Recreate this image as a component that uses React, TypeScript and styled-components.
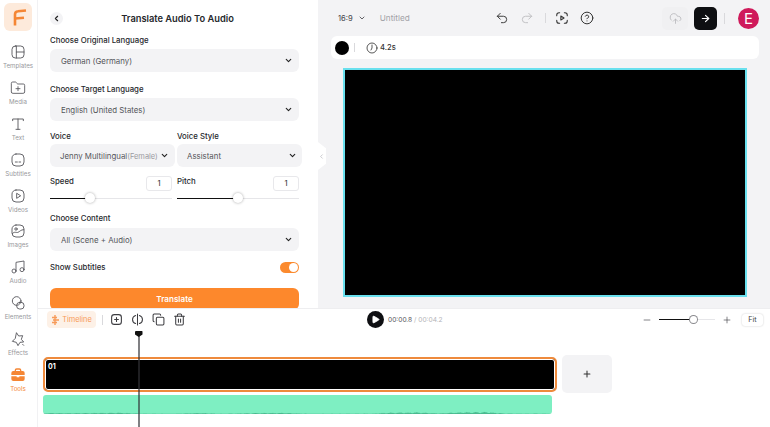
import React from 'react';
import styled, { createGlobalStyle } from 'styled-components';
import {
	ArrowRight, ChevronDown, ChevronLeft, CircleHelp, Clock7, CloudUpload, Copy,
	FolderPlus, Minus, Music, Play, Plus, Redo2, Trash2, Undo2
} from 'lucide-react';

const GlobalStyle = createGlobalStyle`
	html, body {
		margin: 0;
		padding: 0;
		background: #fff;
		font-family: Inter, "Liberation Sans", sans-serif;
	}
	* {
		box-sizing: border-box;
	}
`;

const Shell = styled.div`
	display: flex;
	width: 770px;
	height: 427px;
	overflow: hidden;
`;

/* left rail */
const Sidebar = styled.nav`
	flex: 0 0 38px;
	display: flex;
	flex-direction: column;
	align-items: center;
	padding: 3px 1px 0 0;
	border-right: 1px solid #f1f1f3;
`;

const Logo = styled.div`
	width: 28px;
	height: 28px;
	margin-bottom: 13px;
	border-radius: 6px;
	background: #fdeadb;
	display: flex;
	align-items: center;
	justify-content: center;
`;

const NavItem = styled.div<{ $active?: boolean }>`
	height: 35.9px;
	display: flex;
	flex-direction: column;
	align-items: center;
	gap: 1px;
	font-size: 6.2px;
	line-height: 9px;
	color: ${p => (p.$active ? '#f58634' : '#98989c')};
	svg {
		color: ${p => (p.$active ? '#f58634' : '#55555a')};
	}
`;

const NavIcon = styled.svg.attrs({
	viewBox: '0 0 24 24',
	fill: 'none',
	stroke: 'currentColor',
	strokeWidth: 1.35,
	strokeLinecap: 'round',
	strokeLinejoin: 'round'
})`
	width: 16px;
	height: 16px;
	flex: none;
`;

/* column with panel + stage above the timeline */
const Main = styled.div`
	flex: 1;
	min-width: 0;
	display: flex;
	flex-direction: column;
`;

const Upper = styled.div`
	flex: 0 0 308px;
	display: flex;
`;

const Panel = styled.section`
	flex: 0 0 280px;
	height: 308px;
	overflow: hidden;
	padding: 1px 19px 0 12px;
`;

const PanelHeader = styled.header`
	display: flex;
	align-items: center;
	height: 34px;
	padding-right: 7px;
`;

const BackButton = styled.div`
	flex: none;
	width: 13px;
	height: 13px;
	border-radius: 50%;
	background: #f3f3f5;
	display: flex;
	align-items: center;
	justify-content: center;
	color: #222;
`;

const Title = styled.h1`
	flex: 1;
	margin: 0;
	text-align: center;
	font-size: 9.3px;
	font-weight: 600;
	color: #26282c;
`;

const FieldLabel = styled.div<{ $gap?: number; $top?: number }>`
	margin-top: ${p => p.$top ?? 0}px;
	margin-bottom: ${p => p.$gap ?? 4}px;
	font-size: 7.8px;
	line-height: 10px;
	font-weight: 500;
	color: #26282c;
	white-space: nowrap;
`;

const Select = styled.div<{ $pad?: number; $right?: number }>`
	height: 23px;
	display: flex;
	align-items: center;
	justify-content: space-between;
	padding: 0 ${p => p.$right ?? 6}px 0 ${p => p.$pad ?? 11}px;
	border-radius: 6px;
	background: #f3f3f5;
	font-size: 7.85px;
	color: #55565b;
	white-space: nowrap;
	svg {
		color: #222;
		flex: none;
	}
`;

const Muted = styled.span`
	font-size: 7.45px;
	color: #9a9a9f;
`;

const VoiceRow = styled.div`
	display: grid;
	grid-template-columns: 125px 125px;
	column-gap: 2px;
	margin-top: 10px;
	width: 252px;
`;

const SliderRow = styled.div`
	display: grid;
	grid-template-columns: 122px 122px;
	column-gap: 5px;
	margin-top: 9px;
`;

const SliderHead = styled.div`
	display: flex;
	justify-content: space-between;
	align-items: flex-start;
	height: 15px;
	font-size: 7.8px;
	line-height: 10px;
	font-weight: 500;
	color: #26282c;
`;

const NumberBox = styled.div`
	width: 26px;
	height: 15px;
	display: flex;
	align-items: center;
	justify-content: center;
	border: 1px solid #e8e8eb;
	border-radius: 3px;
	font-size: 7.4px;
	color: #444;
`;

const SliderTrack = styled.div<{ $value: number }>`
	position: relative;
	height: 1px;
	margin-top: 6.5px;
	background: linear-gradient(
		90deg,
		#111 ${p => p.$value}%,
		#e6e6e9 ${p => p.$value}%
	);
	&::after {
		content: '';
		position: absolute;
		left: ${p => p.$value}%;
		top: -4.5px;
		width: 10px;
		height: 10px;
		margin-left: -5px;
		border-radius: 50%;
		background: #fff;
		box-shadow: 0 0 3px rgba(0, 0, 0, 0.35);
	}
`;

const SwitchRow = styled.div`
	display: flex;
	align-items: center;
	justify-content: space-between;
	height: 12px;
	margin-top: 10px;
	font-size: 7.8px;
	font-weight: 500;
	color: #26282c;
`;

const Toggle = styled.div`
	width: 19px;
	height: 11px;
	border-radius: 6px;
	background: #fb8a2e;
	display: flex;
	justify-content: flex-end;
	align-items: center;
	padding-right: 1px;
	&::after {
		content: '';
		width: 9px;
		height: 9px;
		border-radius: 50%;
		background: #fff;
	}
`;

const TranslateButton = styled.div`
	height: 22px;
	margin-top: 15px;
	border-radius: 6px;
	background: #fd882c;
	color: #fff;
	font-size: 8.1px;
	font-weight: 600;
	display: flex;
	align-items: center;
	justify-content: center;
`;

/* preview side */
const Stage = styled.section`
	flex: 1;
	position: relative;
	background: #f3f3f5;
`;

const CollapseTab = styled.div`
	position: absolute;
	left: 0;
	top: 142px;
	width: 8px;
	height: 28px;
	background: #fff;
	clip-path: polygon(0 0, 100% 22%, 100% 78%, 0 100%);
	display: flex;
	align-items: center;
	color: #a9a9ae;
`;

const TopBar = styled.div`
	display: flex;
	align-items: center;
	height: 36px;
	padding: 0 11px 0 20px;
	color: #333;
`;

const RatioGroup = styled.div`
	flex: 0 0 157px;
	display: flex;
	align-items: center;
	font-size: 7.6px;
	color: #44454a;
	svg {
		margin-left: 5px;
	}
`;

const DocName = styled.span`
	margin-left: 14px;
	font-size: 8.2px;
	color: #a2a2a7;
`;

const HistoryGroup = styled.div`
	display: flex;
	align-items: center;
	gap: 11px;
`;

const Rule = styled.span<{ $height?: number; $left?: number; $right?: number }>`
	display: inline-block;
	flex: none;
	width: 1px;
	height: ${p => p.$height ?? 10}px;
	margin: 0 ${p => p.$right ?? 0}px 0 ${p => p.$left ?? 0}px;
	background: #d9d9dc;
`;

const RightGroup = styled.div`
	margin-left: auto;
	display: flex;
	align-items: center;
`;

const CloudButton = styled.div`
	width: 26px;
	height: 23px;
	border-radius: 5px;
	background: #f0f0f2;
	display: flex;
	align-items: center;
	justify-content: center;
	color: #b6b6ba;
`;

const NextButton = styled.div`
	width: 23px;
	height: 23px;
	margin-left: 6px;
	border-radius: 5px;
	background: #0e0f12;
	color: #fff;
	display: flex;
	align-items: center;
	justify-content: center;
`;

const Avatar = styled.div`
	width: 21px;
	height: 21px;
	border-radius: 50%;
	background: #cf1a5b;
	color: #fff;
	font-size: 15px;
	display: flex;
	align-items: center;
	justify-content: center;
`;

const InfoStrip = styled.div`
	display: flex;
	align-items: center;
	height: 23px;
	margin: 0 11px 0 13px;
	padding-left: 4px;
	border-radius: 6px;
	background: #fff;
	color: #222;
`;

const ColorDot = styled.span`
	width: 14px;
	height: 14px;
	border-radius: 50%;
	background: #000;
	margin-right: 5px;
`;

const ClockIcon = styled(Clock7)`
	margin-left: 11px;
`;

const Duration = styled.span`
	margin-left: 2px;
	font-size: 7.6px;
	font-weight: 500;
	color: #333;
`;

const Canvas = styled.div`
	width: 404px;
	height: 229px;
	margin: 9px 0 0 25px;
	border: 2px solid #69e0ee;
	background: #000;
`;

/* timeline */
const Timeline = styled.section`
	position: relative;
	flex: 1;
	border-top: 1px solid #eeeef0;
`;

const TimelineBar = styled.div`
	display: flex;
	align-items: center;
	height: 21px;
	padding-right: 7px;
	color: #3c3c40;
`;

const ToolGroup = styled.div`
	flex: 0 0 329px;
	display: flex;
	align-items: center;
	padding-left: 9px;
`;

const TimelineTab = styled.div`
	width: 49px;
	height: 17px;
	display: flex;
	align-items: center;
	justify-content: center;
	gap: 3px;
	border-radius: 4px;
	background: #fdf1e7;
	color: #f79a58;
	font-size: 7.4px;
`;

const ToolIcons = styled.div`
	display: flex;
	align-items: center;
	gap: 8px;
	margin-left: 7px;
`;

const PlayButton = styled.div`
	width: 17px;
	height: 17px;
	border-radius: 50%;
	background: #0e0f12;
	color: #fff;
	display: flex;
	align-items: center;
	justify-content: center;
`;

const TimeText = styled.span`
	margin-left: 4px;
	font-size: 6.6px;
	color: #55565b;
`;

const TimeTotal = styled.span`
	color: #b4b4b8;
`;

const ZoomGroup = styled.div`
	margin-left: auto;
	display: flex;
	align-items: center;
`;

const ZoomTrack = styled(SliderTrack)`
	width: 56px;
	margin: 0 7px;
	&::after {
		width: 7px;
		height: 7px;
		top: -3px;
		margin-left: -3.5px;
		box-shadow: 0 0 0 1px #8a8a8e;
	}
`;

const FitButton = styled.div`
	width: 21px;
	height: 12px;
	margin-left: 10px;
	border-radius: 3px;
	box-shadow: 0 0 2px rgba(0, 0, 0, 0.22);
	font-size: 7.2px;
	color: #444;
	display: flex;
	align-items: center;
	justify-content: center;
`;

const Tracks = styled.div`
	margin-top: 25px;
	padding-left: 5px;
`;

const ClipRow = styled.div`
	display: flex;
	align-items: center;
	height: 38px;
`;

const Clip = styled.div`
	width: 514px;
	height: 35px;
	padding: 3px;
	border: 2px solid #ee8a3c;
	border-radius: 5px;
	box-shadow: inset 0 0 0 1px #fff;
	background: #000;
	color: #fff;
	font-size: 7px;
	font-weight: 700;
	line-height: 9px;
`;

const AddClip = styled.div`
	width: 50px;
	height: 38px;
	margin-left: 5px;
	border-radius: 5px;
	background: #f3f3f5;
	color: #333;
	display: flex;
	align-items: center;
	justify-content: center;
`;

const AudioTrack = styled.div`
	width: 509px;
	height: 19px;
	margin-top: 2px;
	border-radius: 3px;
	overflow: hidden;
	background: #7eefc2;
	display: flex;
	align-items: flex-end;
`;

const Wave = styled.svg`
	width: 100%;
	height: 4px;
	display: block;
`;

const Playhead = styled.div`
	position: absolute;
	left: 100px;
	top: 22px;
	bottom: 0;
	width: 1.5px;
	background: rgba(50, 50, 55, 0.62);
	&::before {
		content: '';
		position: absolute;
		left: -3px;
		top: 0;
		width: 7.5px;
		height: 6px;
		background: #111;
		border-radius: 1px;
		clip-path: polygon(0 0, 100% 0, 100% 60%, 50% 100%, 0 60%);
	}
`;

// rough envelope of the quiet clip, [x, height]
const envelope = [
	[0, 1], [50, 1.2], [75, 1.6], [100, 0.5], [130, 0.4], [155, 1.2], [180, 0.4], [205, 1],
	[240, 1.4], [265, 0.4], [330, 0.5], [345, 1.6], [375, 2], [395, 0.8], [420, 2.2], [445, 2.4],
	[462, 0.6], [509, 0.5]
];

const waveHeight = (x: number) => {
	const i = envelope.findIndex(e => e[0] >= x);
	if (i <= 0) return envelope[0][1];
	const [x0, h0] = envelope[i - 1];
	const [x1, h1] = envelope[i];
	const h = h0 + ((h1 - h0) * (x - x0)) / (x1 - x0);
	return h * (0.35 + 0.65 * Math.abs(Math.sin(x * 1.7) * Math.cos(x * 0.37)));
};

const wavePath = () => {
	let d = 'M0 4';
	for (let x = 0; x <= 509; x += 1) d += ` L${x} ${(4 - waveHeight(x)).toFixed(2)}`;
	return d + ' L509 4 Z';
};

const navItems: { label: string; icon: React.ReactNode; active?: boolean }[] = [
	{
		label: 'Templates',
		icon: <NavIcon><rect x="3" y="3" width="18" height="18" rx="5" /><path d="M9.5 3v18M9.5 12H21" /></NavIcon>
	},
	{ label: 'Media', icon: <FolderPlus size={16} strokeWidth={1.3} /> },
	{
		label: 'Text',
		icon: <NavIcon><path d="M4 7V4.5h16V7M12 4.5V20M9 20h6" /></NavIcon>
	},
	{
		label: 'Subtitles',
		icon: <NavIcon><rect x="3" y="3" width="18" height="18" rx="6" /><path d="M8 15h3M13.5 15H16" /></NavIcon>
	},
	{
		label: 'Videos',
		icon: <NavIcon><rect x="3" y="3" width="18" height="18" rx="6" /><path d="M10 8.500v7l5.500-3.500z" /></NavIcon>
	},
	{
		label: 'Images',
		icon: <NavIcon><rect x="3" y="3" width="18" height="18" rx="6" /><circle cx="9" cy="9" r="1.8" /><path d="M3.500 16c3-4 6-1 8.500-2s4-4 8.500-4" /></NavIcon>
	},
	{ label: 'Audio', icon: <Music size={16} strokeWidth={1.3} /> },
	{
		label: 'Elements',
		icon: <NavIcon><circle cx="10" cy="9" r="6.500" /><rect x="10" y="11" width="11" height="10" rx="4.500" /></NavIcon>
	},
	{
		label: 'Effects',
		icon: <NavIcon><path d="M10 3l3 4.500 6-.5-2 5.500 3.500 4-5.500.5-3 5-2.500-5-6-1.500 4-4z" /><path d="M19 20l1.500 1.500" /></NavIcon>
	},
	{
		label: 'Tools',
		active: true,
		icon: (
			<svg width="16" height="16" viewBox="0 0 24 24">
				<path d="M8 7V5a2 2 0 0 1 2-2h4a2 2 0 0 1 2 2v2" fill="none" stroke="#f58634" strokeWidth="2" />
				<path d="M2 9a3 3 0 0 1 3-3h14a3 3 0 0 1 3 3v3H2z" fill="#f58634" />
				<path d="M2 14h8v1.500h4V14h8v4a3 3 0 0 1-3 3H5a3 3 0 0 1-3-3z" fill="#f58634" />
			</svg>
		)
	}
];

const LanguageSelect: React.FC<{ text: string }> = ({ text }) => (
	<Select>
		<span>{text}</span>
		<ChevronDown size={9} strokeWidth={3} />
	</Select>
);

const App: React.FC = () => {
	return <Shell>
		<GlobalStyle />
		<Sidebar>
			<Logo>
				<svg width="28" height="28" viewBox="0 0 28 28" fill="none" stroke="#f58634" strokeWidth="2.6">
					<path d="M11 22.500V11.500Q11 8.500 14 8.300L22 7.500" />
					<path d="M11 15.500L20 14.800" />
				</svg>
			</Logo>
			{navItems.map(item => (
				<NavItem key={item.label} $active={item.active}>
					{item.icon}
					<span>{item.label}</span>
				</NavItem>
			))}
		</Sidebar>
		<Main>
			<Upper>
				<Panel>
					<PanelHeader>
						<BackButton><ChevronLeft size={9} strokeWidth={3} /></BackButton>
						<Title>Translate Audio To Audio</Title>
					</PanelHeader>
					<FieldLabel>Choose Original Language</FieldLabel>
					<LanguageSelect text="German (Germany)" />
					<FieldLabel $top={12}>Choose Target Language</FieldLabel>
					<LanguageSelect text="English (United States)" />
					<VoiceRow>
						<div>
							<FieldLabel $gap={3}>Voice</FieldLabel>
							<Select $pad={10} $right={6}>
								<span>Jenny Multilingual<Muted>(Female)</Muted></span>
								<ChevronDown size={9} strokeWidth={3} />
							</Select>
						</div>
						<div>
							<FieldLabel $gap={3}>Voice Style</FieldLabel>
							<Select $pad={10} $right={5}>
								<span>Assistant</span>
								<ChevronDown size={9} strokeWidth={3} />
							</Select>
						</div>
					</VoiceRow>
					<SliderRow>
						<div>
							<SliderHead>Speed<NumberBox>1</NumberBox></SliderHead>
							<SliderTrack $value={33} />
						</div>
						<div>
							<SliderHead>Pitch<NumberBox>1</NumberBox></SliderHead>
							<SliderTrack $value={50} />
						</div>
					</SliderRow>
					<FieldLabel $top={14.5} $gap={5}>Choose Content</FieldLabel>
					<LanguageSelect text="All (Scene + Audio)" />
					<SwitchRow>Show Subtitles<Toggle /></SwitchRow>
					<TranslateButton>Translate</TranslateButton>
				</Panel>
				<Stage>
					<CollapseTab><ChevronLeft size={7} strokeWidth={2} /></CollapseTab>
					<TopBar>
						<RatioGroup>
							16:9
							<ChevronDown size={8} strokeWidth={2.5} />
							<DocName>Untitled</DocName>
						</RatioGroup>
						<HistoryGroup>
							<Undo2 size={14} strokeWidth={1.6} />
							<Redo2 size={14} strokeWidth={1.6} color="#bdbdc1" />
							<Rule $right={-2} />
							<svg width="14" height="14" viewBox="0 0 24 24" fill="none" stroke="currentColor" strokeWidth="1.8" strokeLinecap="round" strokeLinejoin="round">
								<path d="M3 8V7a4 4 0 0 1 4-4h1M16 3h1a4 4 0 0 1 4 4v1M21 16v1a4 4 0 0 1-4 4h-1M8 21H7a4 4 0 0 1-4-4v-1" />
								<path d="M10 8.500v7l5.500-3.500z" />
							</svg>
							<CircleHelp size={14} strokeWidth={1.7} />
						</HistoryGroup>
						<RightGroup>
							<CloudButton><CloudUpload size={13} strokeWidth={1.5} /></CloudButton>
							<NextButton><ArrowRight size={11} strokeWidth={2.5} /></NextButton>
							<Rule $height={11} $left={7} $right={13} />
							<Avatar>E</Avatar>
						</RightGroup>
					</TopBar>
					<InfoStrip>
						<ColorDot />
						<Rule $height={9} />
						<ClockIcon size={12} strokeWidth={1.5} />
						<Duration>4.2s</Duration>
					</InfoStrip>
					<Canvas />
				</Stage>
			</Upper>
			<Timeline>
				<TimelineBar>
					<ToolGroup>
						<TimelineTab>
							<svg width="8" height="10" viewBox="0 0 8 10" fill="none" stroke="#f79a58" strokeWidth="1.4">
								<path d="M4 0v10M1 2.500h5M2 5h6M1 7.500h5" />
							</svg>
							Timeline
						</TimelineTab>
						<Rule $height={10} $left={6} />
						<ToolIcons>
							<svg width="13" height="13" viewBox="0 0 24 24" fill="none" stroke="currentColor" strokeWidth="2" strokeLinecap="round">
								<rect x="3" y="3" width="18" height="18" rx="5" />
								<path d="M12 8.500v7M8.500 12h7" />
							</svg>
							<svg width="13" height="13" viewBox="0 0 24 24" fill="none" stroke="currentColor" strokeWidth="1.9" strokeLinecap="round">
								<path d="M12 2v20M8.500 4.500a7.800 7.800 0 0 0 0 15M15.500 4.500a7.800 7.800 0 0 1 0 15" />
							</svg>
							<Copy size={13} strokeWidth={1.9} />
							<Trash2 size={13} strokeWidth={1.9} />
						</ToolIcons>
					</ToolGroup>
					<PlayButton><Play size={9} fill="#fff" strokeWidth={2} /></PlayButton>
					<TimeText>00:00.8 <TimeTotal>/ 00:04.2</TimeTotal></TimeText>
					<ZoomGroup>
						<Minus size={10} strokeWidth={1.5} />
						<ZoomTrack $value={61} />
						<Plus size={10} strokeWidth={1.5} />
						<FitButton>Fit</FitButton>
					</ZoomGroup>
				</TimelineBar>
				<Tracks>
					<ClipRow>
						<Clip>01</Clip>
						<AddClip><Plus size={10} strokeWidth={2.5} /></AddClip>
					</ClipRow>
					<AudioTrack>
						<Wave viewBox="0 0 509 4" preserveAspectRatio="none">
							<path d={wavePath()} fill="#49b98e" />
						</Wave>
					</AudioTrack>
				</Tracks>
				<Playhead />
			</Timeline>
		</Main>
	</Shell>;
};

export default App;
